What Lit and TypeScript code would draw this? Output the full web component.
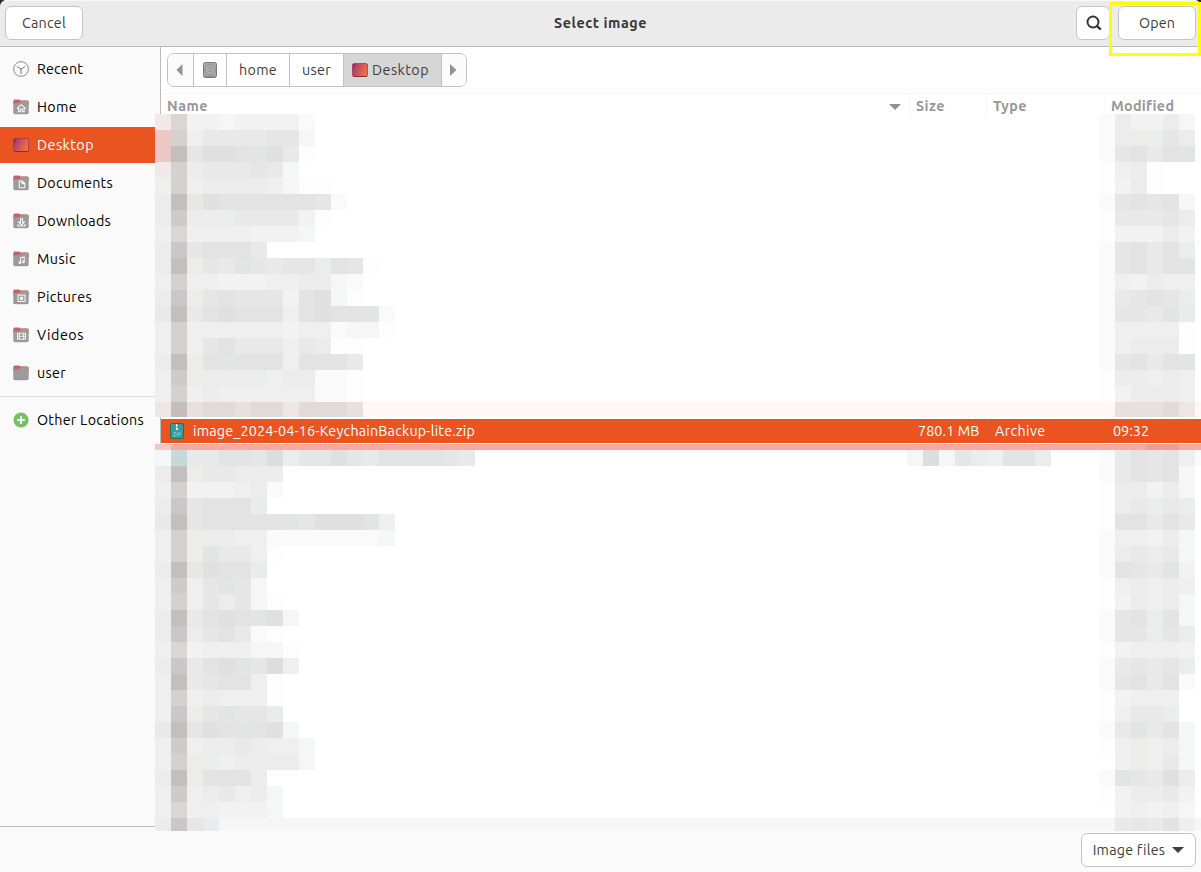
import { LitElement, html, svg, css } from "lit";
import { customElement, property } from "lit/decorators.js";
import { classMap } from "lit/directives/class-map.js";

/* Label whose tracking is adjusted so that the text takes exactly `w` pixels. */
@customElement("fit-label")
class FitLabel extends LitElement {
  @property() text = "";
  @property({ type: Number }) w = 0;
  static styles = css`
    :host { display: inline-block; white-space: nowrap; line-height: 20px; }
    .t { display: inline-block; white-space: pre; }
  `;
  firstUpdated() {
    const el = this.renderRoot.querySelector(".t") as HTMLElement;
    const natural = el.getBoundingClientRect().width;
    el.style.letterSpacing = (this.w - natural) / this.text.length + "px";
  }
  render() {
    return html`<span class="t">${this.text}</span>`;
  }
}

const COLORS: Record<string, string> = {
  a: "#fdfdfd", b: "#fafafa", c: "#f6f6f6", d: "#f2f2f2", e: "#efefef", f: "#ececec",
  g: "#e9e9e9", h: "#e6e6e6", i: "#e3e3e3", j: "#e0e0e0", k: "#dddddd",
  P: "#d8d7d6", Q: "#d4d1d1", R: "#c2bfbe", S: "#cfcbca", T: "#c9c7c8",
  w: "#f5f7f7", x: "#e3e5e5", y: "#ebeded", z: "#e7e7e4", u: "#ececea", v: "#eaebed",
  "1": "#f2e8e7", "2": "#e9c8c5", "3": "#ede6e5", "4": "#c6bcbd", "5": "#e6e1df", "6": "#e0dbda",
  "7": "#e6e0e0", "8": "#fdf7f6", "9": "#c5dad8",
};

/* [row, left columns, right columns] */
const MOSAIC: [number, string, string][] = [
  [0, "1Pddcddddb", "bfddfc"],
  [1, "2Qegggghhc", "bfuyhfa"],
  [2, "2Rhjjixjga", "bhigixa"],
  [3, "1Qfggghgw", "aefa.."],
  [4, "eQeffffecaa", "adfa.."],
  [5, "fRzjiiiiiihb", "bhihic"],
  [6, "fSffyggggda", "aggghf"],
  [7, "ePeeeedddw", "adddfd"],
  [8, "fThiiig", "bhigiy"],
  [9, "fRuhgxhghhyiha", "bhigix"],
  [10, "eQeedddeeffcb", "bedfee"],
  [11, "fTuhihhhdijwa", "bghihy"],
  [12, "gRgijiiieijiixb", "bhhgxv"],
  [13, "eQeeeeeedeebcca", "beeeea"],
  [14, "eQehigggegfaa", "befffa"],
  [15, "fRuixiiieiiig", "bhigix"],
  [16, "eSufffyeffbba", "affefe"],
  [17, "eQefeeeeeebba", "adfffe"],
  [18, "345667663666" + "5" + "8".repeat(46), "8777638"],
  [21, "w9ggiihkfhhjhgiiiihg", "bgihieb"],
  [22, "fRuggfff", "bgihic"],
  [23, "eQdddefb", "affdfc"],
  [24, "fThiiiv", "afgygy"],
  [25, "gRhiiiiixhjjjxe", "aiigig"],
  [26, "eQuffeebbbbbbbw", "beedfw"],
  [27, "eQuxggea", "bfgfgw"],
  [28, "fRzjiiv", "bihgxd"],
  [29, "eSehxhc", "aefefe"],
  [30, "eQehfhca", "adfefw"],
  [31, "fRgijixjc", "bhiyiw"],
  [32, "fTfhigba", "bhhyhy"],
  [33, "ePdeeecca", "adeeed"],
  [34, "fTgijxhke", "bghghy"],
  [35, "eRghiiea", "bhigib"],
  [36, "eQefeeea", "adeee."],
  [37, "eTuhxhhv", "aeggy."],
  [38, "gRhjixijw", "bgxgiw"],
  [39, "eSeffgfeew", "aeuefw"],
  [40, "eQuyeffffc", ".euegw"],
  [41, "fRuiiif", "bxhgjf"],
  [42, "eSefgefw", "adffgd"],
  [43, "ePeedddw", ".dedec"],
  [44, "fThv" + "c".repeat(55), "cghgiec"],
];
const EXTRA = "ckchfeiif";

@customElement("pixel-mosaic")
class PixelMosaic extends LitElement {
  static styles = css`
    :host { display: block; }
    svg { display: block; }
  `;
  run(row: number, start: number, codes: string) {
    const h = row === 18 ? 15 : row === 44 ? 13 : 16;
    return [...codes].map((c, n) =>
      c === "." ? null : svg`<rect x=${(start + n) * 16} y=${row * 16} width="16" height=${h} fill=${COLORS[c]}></rect>`);
  }
  render() {
    return html`<svg width="1046" height="717" shape-rendering="crispEdges">
      ${MOSAIC.map(([r, l, rt]) => [this.run(r, 0, l), this.run(r, 59, rt)])}
      ${this.run(21, 47, EXTRA)}
      <rect x="0" y="330" width="16" height="6" fill="#f1c8c4"></rect>
      <rect x="16" y="330" width="1030" height="6" fill="#f4aaa3"></rect>
      <rect x="992" y="330" width="32" height="6" fill="#ef9b96"></rect>
    </svg>`;
  }
}

const folder = (glyph: unknown) => svg`
  <g transform="translate(0 -.7)">
  <path d="M0.3 3 Q0.3 1.1 1.8 1.1 H6.2 L7.4 2.2 H14.2 Q15.7 2.2 15.7 3.8 V7 H0.3Z" fill="#c0646c"></path>
  <path d="M8 2.2 H14.2 Q15.7 2.2 15.7 3.8 V6 H8Z" fill="#c48a80"></path>
  <path d="M0.3 4.9 H5.6 L7.2 3.8 H15.7 V13.6 Q15.7 15.2 14.2 15.2 H1.8 Q0.3 15.2 0.3 13.6Z" fill="#9c9a9a"></path>
  <path d="M.6 14.4 Q1 15.4 2 15.4 H14 Q15 15.4 15.4 14.4" fill="none" stroke="#7c7a7a" stroke-width=".8"></path>
  <g fill="none" stroke="#f6f6f6" stroke-width="1.1">${glyph}</g></g>`;

const desktop = (id: string) => svg`
  <defs><linearGradient id=${id} x1="0" y1="0" x2="1" y2=".4">
    <stop offset="0" stop-color="#7c2c74"></stop><stop offset=".2" stop-color="#8c3470"></stop>
    <stop offset=".22" stop-color="#b03f72"></stop><stop offset="1" stop-color="#f0703c"></stop>
  </linearGradient></defs>
  <rect x=".5" y="1.5" width="15" height="13" rx="1.6" fill="url(#${id})" stroke="#a03a4c" stroke-width=".8"></rect>
  <path d="M1.2 14.5 H14.8" stroke="#7c3038" stroke-width=".9"></path>`;

const ICONS: Record<string, unknown> = {
  recent: svg`<circle cx="8" cy="8" r="7.4" fill="#fcfcfc" stroke="#8a8a8a" stroke-width="1"></circle>
    <path d="M3.6 5.4 L8 8 L12.4 5.4" fill="none" stroke="#808080" stroke-width="1"></path>
    <path d="M8 7.2 V13" stroke="#e0486c" stroke-width="1"></path>`,
  home: folder(svg`<path d="M4 10.2 L8.3 6.4 L12.6 10.2 M5.5 9.4 V13.3 H7.3 V10.8 H9.3 V13.3 H11.1 V9.4"></path>`),
  desktop: desktop("side"),
  documents: folder(svg`<path d="M6.3 6.8 H9.3 L11.8 9.2 V13.4 H6.3Z M9.1 6.8 V9.3 H11.8"></path>`),
  downloads: folder(svg`<path d="M7.5 6.4 V9.8 H5.6 L8.5 12.7 L11.4 9.8 H9.5 V6.4Z M4.9 11.8 V13.7 H12.1 V11.8"></path>`),
  music: folder(svg`<path d="M7.6 12.5 V7.3 L11.2 6.7 V11.7"></path><circle cx="6.8" cy="12.4" r=".8"></circle><circle cx="10.4" cy="11.6" r=".8"></circle>`),
  pictures: folder(svg`<rect x="5" y="6.8" width="7" height="6.4"></rect><rect x="7.4" y="9" width="2.2" height="2" fill="#f4f4f4"></rect>`),
  videos: folder(svg`<path d="M4.5 6.4 V13.6 M12.5 6.4 V13.6 M6.5 6.4 V13.6 M10.5 6.4 V13.6 M6.5 7 H10.5 M6.5 10 H10.5 M6.5 13 H10.5 M4 7.6 H6.5 M4 10 H6.5 M4 12.4 H6.5 M10.5 7.6 H13 M10.5 10 H13 M10.5 12.4 H13" stroke-width=".9"></path>`),
  user: folder(null),
  other: svg`<circle cx="8" cy="8" r="7.6" fill="#77c164"></circle><path d="M8 4.2 V11.8 M4.2 8 H11.8" stroke="#fff" stroke-width="1.9"></path>`,
};

const PLACES: [string, string, number][] = [
  ["recent", "Recent", 46], ["home", "Home", 40], ["desktop", "Desktop", 57],
  ["documents", "Documents", 76], ["downloads", "Downloads", 74], ["music", "Music", 39],
  ["pictures", "Pictures", 55], ["videos", "Videos", 47], ["user", "user", 29],
];

@customElement("app-root")
class AppRoot extends LitElement {
  static styles = css`
    :host { display: block; width: 1201px; height: 872px; background: #2b2530; overflow: hidden; position: relative;
      font-family: Ubuntu, "Noto Sans", sans-serif; font-size: 14.3px; color: #000; }
    * { box-sizing: border-box; }
    .window { display: flex; flex-direction: column; height: 872px; border-radius: 7px 7px 0 0; overflow: hidden; background: #fafafa; }
    .header { height: 47px; flex: none; display: grid; grid-template-columns: 1fr auto 1fr; align-items: center;
      padding: 0 5px 1px; background: #ebebeb; border-bottom: 1px solid #bcbab8; box-shadow: inset 0 1px #f8f8f8; color: #3d3d3d; }
    .btn { height: 34px; display: flex; align-items: center; justify-content: center; background: #fff;
      border: 1px solid #c6c4c2; border-radius: 6px; width: 78px; }
    .btn.search { width: 34px; padding-left: 1px; }
    .title { font-weight: 700; color: #383838; display: flex; }
    .actions { display: flex; justify-content: flex-end; gap: 8px; }
    .main { height: 779px; flex: none; display: flex; }
    .sidebar { width: 161px; flex: none; border-right: 1px solid #bdbbb9; background: #fafafa; padding-top: 4px;
      display: flex; flex-direction: column; gap: 2px; }
    .place { height: 36px; flex: none; display: flex; align-items: center; gap: 8px; padding-left: 13px; }
    .place.on { background: #e95420; color: #fff; }
    .rule { height: 1px; flex: none; background: #dedede; margin: 3px 0; }
    .content { flex: 1; min-width: 0; background: #fff; display: flex; flex-direction: column; }
    .pathrow { height: 46px; padding: 6px; display: flex; flex: none; }
    .path { height: 34px; display: flex; border: 1px solid #c4c2c0; border-radius: 7px; overflow: hidden; color: #3d3d3d; background: #fff; }
    .seg { display: flex; align-items: center; justify-content: center; border-right: 1px solid #c4c2c0; }
    .seg:last-child { border-right: 0; }
    .arrow { width: 26px; background: #fbfbfb; padding-right: 2px; }
    .arrow.last { width: 24px; padding-right: 1px; }
    .disk { width: 33px; }
    .home { width: 63px; }
    .user { width: 54px; }
    .cur { width: 98px; background: #d6d6d6; gap: 4px; padding-right: 4px; }
    .cols { height: 26px; flex: none; display: grid; grid-template-columns: 749px 77px 118px 1fr; border-top: 1px solid #f5f5f5;
      color: #979797; font-weight: 700; }
    .col { display: flex; align-items: center; padding: 0 0 2px 6px; border-right: 1px solid #f8f8f8; }
    .col:last-child { border: 0; }
    .col.name { justify-content: space-between; padding-right: 8px; }
    .list { flex: 1; padding-top: 300px; }
    .row { height: 24px; background: #e95420; color: #fff; display: grid; grid-template-columns: 757px 77px 118px 1fr; align-items: center; }
    .file { display: flex; align-items: center; gap: 8px; padding-left: 8px; }
    .footer { flex: 1; border-top: 1px solid #bdbbb9; background: #fafafa; display: flex; justify-content: flex-end; padding: 6px 5px 0; }
    .filter { width: 115px; gap: 7px; color: #3d3d3d; }
    .cover { position: absolute; left: 155px; top: 114px; }
    .focus { position: absolute; left: 1109px; top: 2px; width: 92px; height: 54px; border: 3px solid #ffff00; }
    svg { display: block; flex: none; }
    .sort { margin-top: 2px; }
  `;

  place([icon, text, w]: [string, string, number]) {
    return html`<div class=${classMap({ place: true, on: icon === "desktop" })}>
      <svg width="16" height="16" viewBox="0 0 16 16">${ICONS[icon]}</svg>
      <fit-label .text=${text} .w=${w}></fit-label>
    </div>`;
  }

  render() {
    const label = (t: string, w: number) => html`<fit-label .text=${t} .w=${w}></fit-label>`;
    return html`
      <div class="window">
        <div class="header">
          <div class="btn">${label("Cancel", 44)}</div>
          <div class="title">${label("Select image", 93)}</div>
          <div class="actions">
            <div class="btn search"><svg width="16" height="16" viewBox="0 0 16 16" fill="none" stroke="#333" stroke-width="1.9"><circle cx="7" cy="7" r="5.5"></circle><path d="M10.8 10.8 L14.8 14.6" stroke-width="2.3"></path></svg></div>
            <div class="btn">${label("Open", 36)}</div>
          </div>
        </div>
        <div class="main">
          <div class="sidebar">
            ${PLACES.map((p) => this.place(p))}
            <div class="rule"></div>
            ${this.place(["other", "Other Locations", 107])}
          </div>
          <div class="content">
            <div class="pathrow">
              <div class="path">
                <div class="seg arrow"><svg width="7" height="12"><path d="M6.5 0 V12 L0.5 6Z" fill="#929292"></path></svg></div>
                <div class="seg disk"><svg width="14" height="16" viewBox="0 0 14 16"><rect x=".5" y=".5" width="13" height="15" rx="2" fill="#a8a8a8" stroke="#777"></rect><circle cx="7" cy="7.6" r="4.8" fill="#b8b8b8" stroke="#808080" stroke-width=".8"></circle><circle cx="7" cy="7.6" r="2.4" fill="none" stroke="#808080" stroke-width=".8"></circle><circle cx="7" cy="7.6" r=".7" fill="#666"></circle><path d="M1 14.3 H13" stroke="#808080" stroke-width=".8"></path></svg></div>
                <div class="seg home">${label("home", 38)}</div>
                <div class="seg user">${label("user", 29)}</div>
                <div class="seg cur"><svg width="16" height="16" viewBox="0 0 16 16">${desktop("crumb")}</svg>${label("Desktop", 57)}</div>
                <div class="seg arrow last"><svg width="7" height="12"><path d="M0 0 V12 L6.5 6Z" fill="#929292"></path></svg></div>
              </div>
            </div>
            <div class="cols">
              <div class="col name">${label("Name", 41)}<svg class="sort" width="12" height="6"><path d="M0 0 H12 L6 6Z" fill="#929292"></path></svg></div>
              <div class="col">${label("Size", 29)}</div>
              <div class="col">${label("Type", 34)}</div>
              <div class="col">${label("Modified", 63)}</div>
            </div>
            <div class="list">
              <div class="row">
                <div class="file">
                  <svg width="16" height="16" viewBox="0 0 16 16"><rect x="1.5" y=".5" width="13" height="15" rx="1.4" fill="#2f9f9f" stroke="#286a66"></rect>
                    <path d="M7 1 H8 V2 H9 V3 H8 V4 H7 V3 H6.9 V2 H7Z" fill="#fff"></path><rect x="7" y="4.5" width="2" height="2.6" fill="#e8f8f6"></rect>
                    <path d="M4.6 9.5 H6.8 L4.4 13 H6.6 M8.4 9.5 L7.8 13 M9.6 13 L10.2 9.6 H11.2 Q12 10.6 10.8 11.4 H10" fill="none" stroke="#8fd6d0" stroke-width=".8"></path></svg>
                  ${label("image_2024-04-16-KeychainBackup-lite.zip", 282)}
                </div>
                ${label("780.1 MB", 61.5)}${label("Archive", 50.5)}${label("09:32", 36)}
              </div>
            </div>
          </div>
        </div>
        <div class="footer"><div class="btn filter">${label("Image files", 72)}<svg width="12" height="6"><path d="M0 0 H12 L6 6Z" fill="#3d3d3d"></path></svg></div></div>
      </div>
      <pixel-mosaic class="cover"></pixel-mosaic>
      <div class="focus"></div>
    `;
  }
}
